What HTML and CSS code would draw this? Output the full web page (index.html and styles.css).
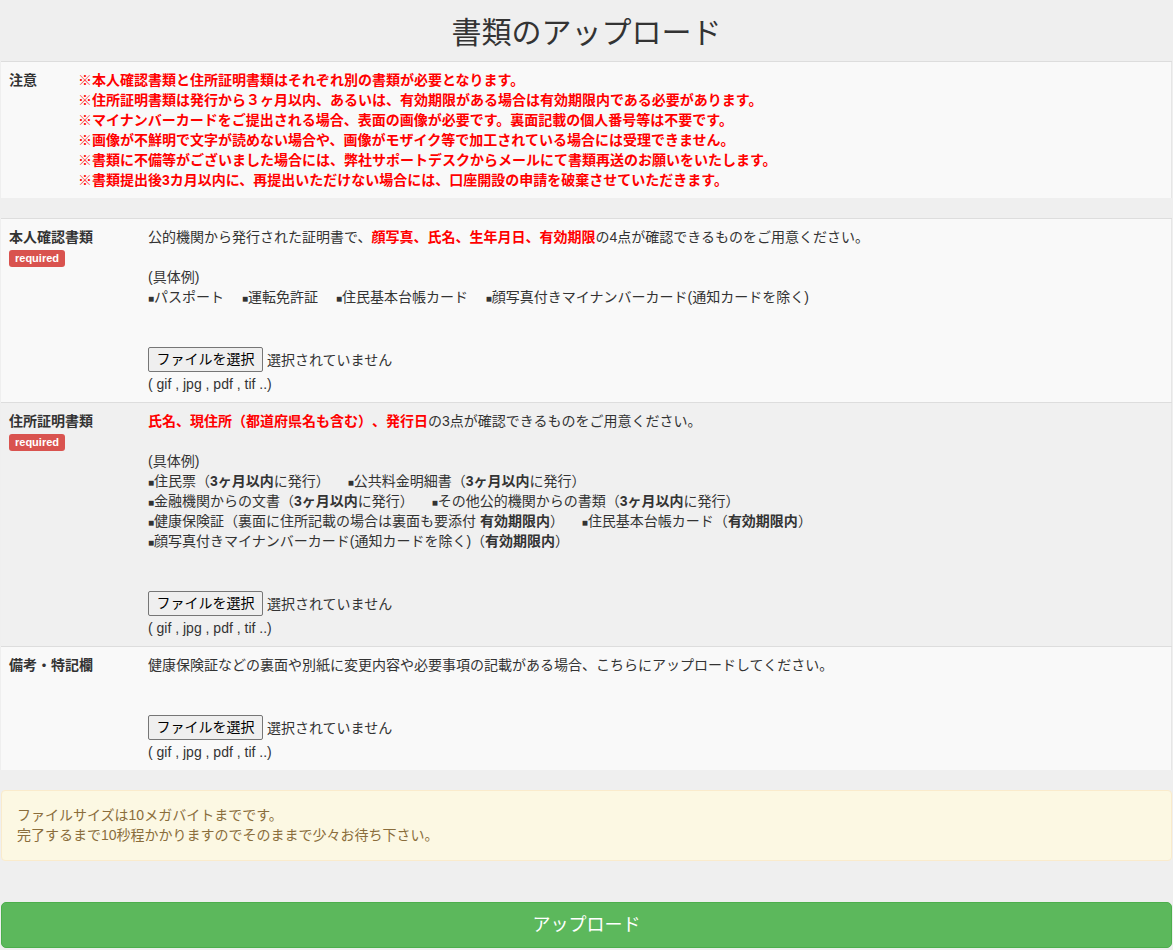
FILE: index.html
```html
<!DOCTYPE html>
<html lang="ja">
<head>
<meta charset="utf-8">
<title>書類のアップロード</title>
<link rel="stylesheet" href="styles.css">
</head>
<body>
<div class="page">
  <h1 class="title">書類のアップロード</h1>

  <table class="tbl notice">
    <tr>
      <th class="lbl-narrow">注意</th>
      <td class="red">
        ※本人確認書類と住所証明書類はそれぞれ別の書類が必要となります。<br>
        ※住所証明書類は発行から３ヶ月以内、あるいは、有効期限がある場合は有効期限内である必要があります。<br>
        ※マイナンバーカードをご提出される場合、表面の画像が必要です。裏面記載の個人番号等は不要です。<br>
        ※画像が不鮮明で文字が読めない場合や、画像がモザイク等で加工されている場合には受理できません。<br>
        ※書類に不備等がございました場合には、弊社サポートデスクからメールにて書類再送のお願いをいたします。<br>
        ※書類提出後3カ月以内に、再提出いただけない場合には、口座開設の申請を破棄させていただきます。
      </td>
    </tr>
  </table>

  <table class="tbl docs">
    <tr class="odd">
      <th class="lbl">本人確認書類<br><span class="badge">required</span></th>
      <td>
        <p>公的機関から発行された証明書で、<b class="red">顔写真、氏名、生年月日、有効期限</b>の4点が確認できるものをご用意ください。</p>
        <p class="ex">(具体例)<br>
        <span class="sq">■</span>パスポート　 <span class="sq">■</span>運転免許証　 <span class="sq">■</span>住民基本台帳カード　 <span class="sq">■</span>顔写真付きマイナンバーカード(通知カードを除く)</p>
        <div class="file"><span class="fbtn">ファイルを選択</span><span class="fname">選択されていません</span></div>
        <div class="fmt">( gif , jpg , pdf , tif ..)</div>
      </td>
    </tr>
    <tr class="even">
      <th class="lbl">住所証明書類<br><span class="badge">required</span></th>
      <td>
        <p><b class="red">氏名、現住所（都道府県名も含む）、発行日</b>の3点が確認できるものをご用意ください。</p>
        <p class="ex">(具体例)<br>
        <span class="sq">■</span>住民票（<b>3ヶ月以内</b>に発行）　 <span class="sq">■</span>公共料金明細書（<b>3ヶ月以内</b>に発行）<br>
        <span class="sq">■</span>金融機関からの文書（<b>3ヶ月以内</b>に発行）　 <span class="sq">■</span>その他公的機関からの書類（<b>3ヶ月以内</b>に発行）<br>
        <span class="sq">■</span>健康保険証（裏面に住所記載の場合は裏面も要添付 <b>有効期限内</b>）　 <span class="sq">■</span>住民基本台帳カード（<b>有効期限内</b>）<br>
        <span class="sq">■</span>顔写真付きマイナンバーカード(通知カードを除く)（<b>有効期限内</b>）</p>
        <div class="file"><span class="fbtn">ファイルを選択</span><span class="fname">選択されていません</span></div>
        <div class="fmt">( gif , jpg , pdf , tif ..)</div>
      </td>
    </tr>
    <tr class="odd">
      <th class="lbl">備考・特記欄</th>
      <td>
        <p>健康保険証などの裏面や別紙に変更内容や必要事項の記載がある場合、こちらにアップロードしてください。</p>
        <div class="file"><span class="fbtn">ファイルを選択</span><span class="fname">選択されていません</span></div>
        <div class="fmt">( gif , jpg , pdf , tif ..)</div>
      </td>
    </tr>
  </table>

  <div class="alert">
    ファイルサイズは10メガバイトまでです。<br>
    完了するまで10秒程かかりますのでそのままで少々お待ち下さい。
  </div>

  <button class="submit" type="button">アップロード</button>
</div>
</body>
</html>
```

FILE: styles.css
```css
html, body {
  margin: 0;
  padding: 0;
  background: #efefef;
}
body {
  font-family: "Liberation Sans", "Noto Sans CJK JP", sans-serif;
  font-size: 14px;
  line-height: 20px;
  color: #333;
  text-spacing-trim: space-all;
}
.page {
  margin: 0 1px;
  padding-bottom: 2px;
}
.title {
  margin: 0;
  height: 61px;
  font-size: 30px;
  line-height: 66px;
  font-weight: normal;
  text-align: center;
  color: #333;
}
.tbl {
  width: 100%;
  border-collapse: collapse;
  background: #f9f9f9;
  border-right: 1px solid #e6e6e6;
}
.tbl th, .tbl td {
  vertical-align: top;
  text-align: left;
  padding: 8px;
  border-top: 1px solid #ddd;
}
.tbl th {
  font-weight: bold;
  font-size: 14px;
}
.notice th.lbl-narrow {
  width: 53px;
}
.notice td {
  padding: 8px;
  font-weight: bold;
  font-size: 14px;
  height: 120px;
}
.red {
  color: #ff0000;
}
.docs {
  margin-top: 20px;
}
.docs th.lbl {
  width: 123px;
  padding-top: 8px;
}
.docs td {
  padding-top: 8px;
}
.docs tr.even {
  background: #f0f0f0;
}
.docs p {
  margin: 0;
}
.docs p.ex {
  margin-top: 20px;
}
.sq {
  font-size: 10px;
  line-height: 10px;
}
.badge {
  display: inline-block;
  margin-top: 3px;
  background: #d9534f;
  color: #fff;
  font-family: "Liberation Sans", sans-serif;
  font-size: 11px;
  font-weight: bold;
  line-height: 12px;
  padding: 2px 6px 3px 6px;
  border-radius: 3px;
}
.file {
  margin-top: 40px;
  display: flex;
  align-items: center;
  height: 25px;
}
.fbtn {
  display: inline-block;
  box-sizing: border-box;
  height: 25px;
  width: 115px;
  border: 1px solid #767676;
  border-radius: 2px;
  background: #efefef;
  color: #000;
  font-size: 14px;
  line-height: 23px;
  text-align: center;
}
.fname {
  margin-left: 4px;
  color: #333;
}
.fmt {
  font-size: 14px;
  margin-top: 2px;
}
.alert {
  margin-top: 20px;
  background: #fcf8e3;
  border: 1px solid #faebcc;
  border-radius: 4px;
  color: #8a6d3b;
  font-size: 14px;
  padding: 14px 15px 15px 15px;
}
.submit {
  display: block;
  width: 100%;
  margin-top: 41px;
  height: 46px;
  background: #5cb85c;
  border: 1px solid #4cae4c;
  border-radius: 5px;
  color: #fff;
  font-family: "Liberation Sans", "Noto Sans CJK JP", sans-serif;
  font-size: 18px;
  line-height: 20px;
  padding: 0;
}
```
